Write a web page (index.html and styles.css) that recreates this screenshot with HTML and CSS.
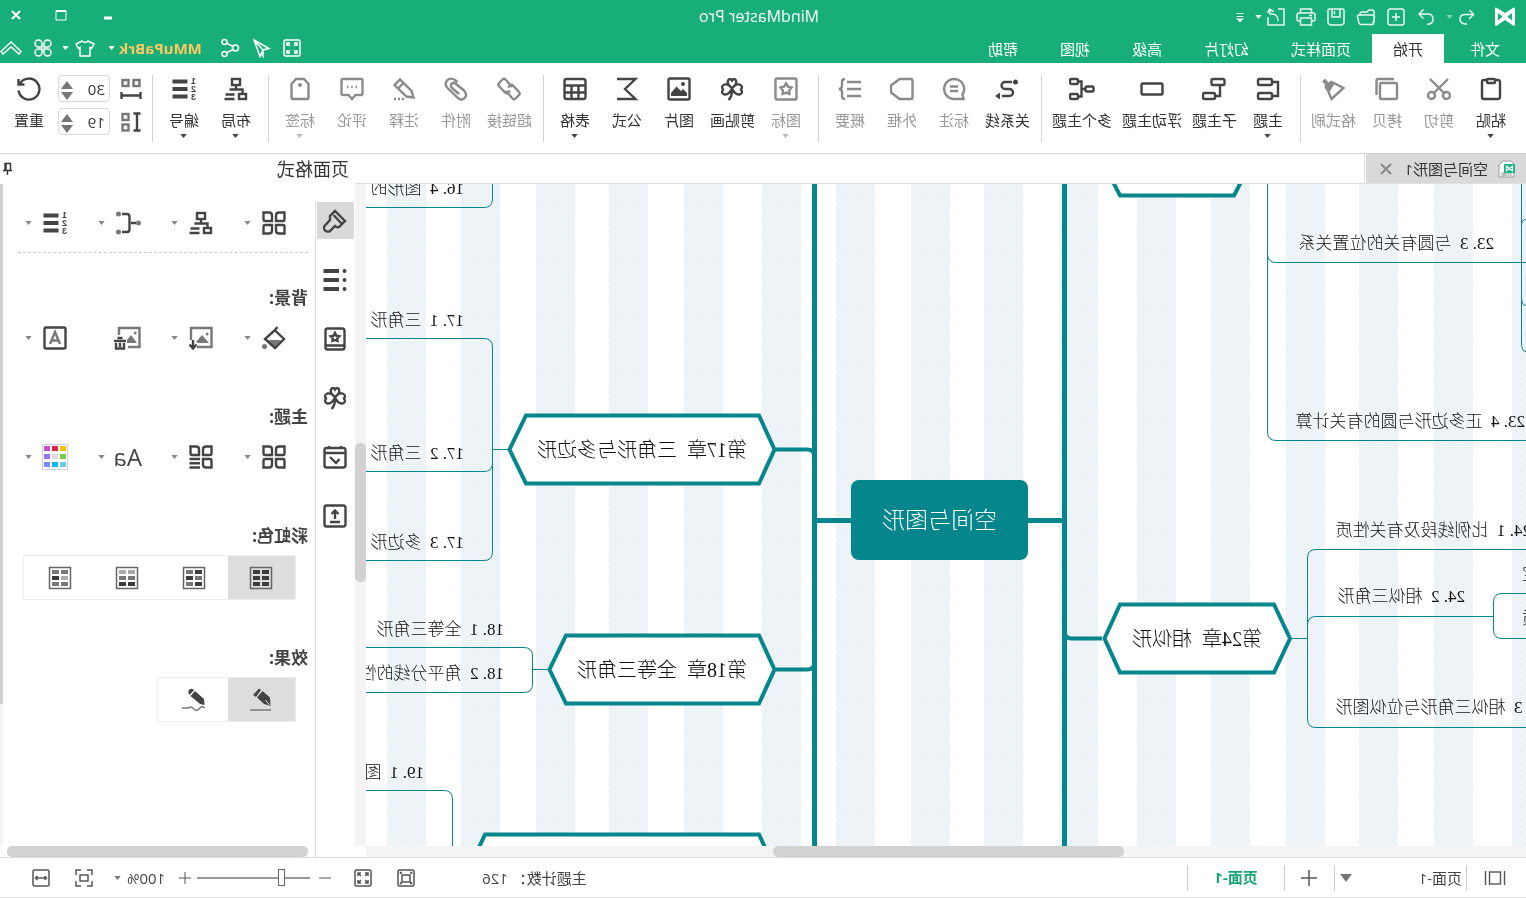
FILE: index.html
```html
<!DOCTYPE html>
<html lang="zh-CN">
<head>
<meta charset="utf-8">
<title>MindMaster Pro</title>
<link rel="stylesheet" href="styles.css">
</head>
<body>
<svg class="sprite" aria-hidden="true">
  <symbol id="caret" viewBox="0 0 8 5"><path class="solid" d="M0 0H8L4 5Z"/></symbol>
  <symbol id="logo" viewBox="0 0 22 20"><path class="solid" fill-rule="evenodd" d="M1 1.500Q1 0 3 1L11 6L19 1Q21 0 21 1.500V17.500Q21 19.500 19 18.500L11 13L3 18.500Q1 19.500 1 17.500ZM4 6V13.500L8.500 9.500ZM18 6V13.500L13.500 9.500Z"/></symbol>
  <symbol id="undo" viewBox="0 0 20 20"><path d="M7.500 3L3.500 7.500L8 12M3.500 7.500H12Q17 7.500 17 12T12 17H10"/></symbol>
  <symbol id="redo" viewBox="0 0 20 20"><path d="M12.500 2.500L17 7L12.500 11.500M17 7H8.500Q3 7 3 12T9 17.500"/></symbol>
  <symbol id="new" viewBox="0 0 20 20"><rect x="2" y="2" width="16" height="16" rx="2"/><path d="M6 10H14M10 6V14"/></symbol>
  <symbol id="open" viewBox="0 0 20 20"><path d="M2 16V5Q2 3 4 3H7L9 5H14Q16 5 16 7V8M3 17.500L1.500 10Q1.500 8 3.500 8H17Q19 8 18.500 10L17 16Q16.500 17.500 15 17.500Z"/></symbol>
  <symbol id="save" viewBox="0 0 20 20"><path d="M3 2H17L18 3V16L16 18H4L2 16V3ZM6 2V10H14V2M11.500 4V7.500"/></symbol>
  <symbol id="print" viewBox="0 0 20 20"><path d="M4.500 6V2H15.500V6M4.500 14H2Q1 14 1 12V8Q1 6 3 6H17Q19 6 19 8V12Q19 14 18 14H15.500M4.500 11H15.500V18H4.500ZM4 8.500H7"/></symbol>
  <symbol id="export" viewBox="0 0 20 20"><path d="M8 2H2V18H18V10M16 2V7Q8 6 8 14M12.500 4.500L16.500 2L18.500 6"/></symbol>
  <symbol id="more" viewBox="0 0 10 12"><path d="M1.500 2.500H8.500M1.500 5.500H8.500"/><path class="solid" d="M1 7.500H9L5 11.500Z"/></symbol>
  <symbol id="fit" viewBox="0 0 20 20"><rect x="2" y="2" width="16" height="16" rx="1.500"/><path d="M5 8V5H8M5.500 5.500L8 8M12 5H15V8M14.500 5.500L12 8M5 12V15H8M5.500 14.500L8 12M15 12V15H12M14.500 14.500L12 12"/></symbol>
  <symbol id="send" viewBox="0 0 20 20"><path d="M17 2L2 10.500L8 12L11 18.500ZM17 2L8 12V18L9.500 15.500"/></symbol>
  <symbol id="share" viewBox="0 0 20 20"><circle cx="15.500" cy="4" r="2.500"/><circle cx="4.500" cy="10" r="3"/><circle cx="15.500" cy="16" r="2.500"/><path d="M7 8.500L13.500 5.200M7 11.500L13.500 14.800"/></symbol>
  <symbol id="shirt" viewBox="0 0 20 20"><path d="M7 3Q10 6 13 3L19 6L16.500 10.500L15 9.500V18H5V9.500L3.500 10.500L1 6Z"/></symbol>
  <symbol id="petals" viewBox="0 0 20 20"><path d="M9 9H5.500A3.500 3.500 0 1 1 9 5.500ZM11 9H14.500A3.500 3.500 0 1 0 11 5.500ZM9 11H5.500A3.500 3.500 0 1 0 9 14.500ZM11 11H14.500A3.500 3.500 0 1 1 11 14.500Z"/></symbol>
  <symbol id="collapse" viewBox="0 0 22 20"><path d="M1 13.500L11 4L21 13.500L19 16L11 9L3 16Z"/></symbol>

  <symbol id="paste" viewBox="0 0 24 24"><rect x="3" y="3" width="18" height="19" rx="2"/><rect class="paper" x="8" y="2" width="8" height="4" rx="1"/></symbol>
  <symbol id="cut" viewBox="0 0 24 24"><circle cx="4.500" cy="18.500" r="3.500"/><circle cx="19.500" cy="18.500" r="3.500"/><path d="M7 16L21 2M17 16L3 2"/></symbol>
  <symbol id="copy" viewBox="0 0 24 24"><rect x="2" y="6" width="17" height="16" rx="1.500"/><path d="M5 2H21Q22.500 2 22.500 3.500V18"/></symbol>
  <symbol id="painter" viewBox="0 0 24 24"><path d="M1.500 11L11 6L19 9L13.500 22Z"/><path class="solid" d="M10 6L14 3.500L16.500 5.500L20 1.500L23 4.500L19.500 8L20.500 11L16 15.500Z"/></symbol>
  <symbol id="topic" viewBox="0 0 24 24"><rect x="8" y="2" width="14" height="6" rx="1.500"/><rect x="8" y="16" width="14" height="6" rx="1.500"/><path d="M8 5H2V19H8"/></symbol>
  <symbol id="subtopic" viewBox="0 0 24 24"><rect x="1.500" y="2" width="13" height="6" rx="1.500"/><rect x="11" y="16" width="12" height="6" rx="1.500"/><path d="M6 8V19H11"/></symbol>
  <symbol id="floating" viewBox="0 0 24 24"><rect x="1.500" y="6.500" width="21" height="11" rx="1.500"/></symbol>
  <symbol id="multi" viewBox="0 0 26 24"><rect x="1.500" y="9.500" width="8" height="5" rx="1.500"/><rect x="17" y="2" width="8" height="5" rx="1.500"/><rect x="17" y="17" width="8" height="5" rx="1.500"/><path d="M9.500 12H13.500M17 4.500H13.500V19.500H17"/></symbol>
  <symbol id="relation" viewBox="0 0 24 24"><circle class="solid" cx="3.500" cy="5" r="2.500"/><path d="M7 5H14A3.500 3.500 0 0 1 14 12H9.500A3.500 3.500 0 0 0 9.500 19H17"/><path class="solid" d="M19 15.500L24 19L19 22.500Z"/></symbol>
  <symbol id="callout" viewBox="0 0 24 24"><path d="M2.500 22L3.500 17.500A10 10 0 1 1 12 22ZM8 9.500H16M8 14H16"/></symbol>
  <symbol id="boundary" viewBox="0 0 24 24"><path d="M3 2H14.500L23 8.500V15.500L14.500 22H3Q1.500 22 1.500 20V4Q1.500 2 3 2Z"/></symbol>
  <symbol id="summary" viewBox="0 0 24 24"><path d="M1 5H15M1 12H15M1 19H15M17 2Q20 2 20 4.500V9Q20 11.500 23 12Q20 12.500 20 15V19.500Q20 22 17 22"/></symbol>
  <symbol id="mark" viewBox="0 0 24 24"><rect x="1.500" y="1.500" width="21" height="21" rx="1.500"/><path d="M12 6.500L14 9.700L17.500 10.500L15.200 13.200L15.400 17L12 15.600L8.600 17L8.800 13.200L6.500 10.500L10 9.700Z"/></symbol>
  <symbol id="clover" viewBox="0 0 24 24"><path d="M12 11Q6.500 7 8 3.500Q10 .500 12 3.500Q14 .500 16 3.500Q17.500 7 12 11ZM12 11.500Q9 6.500 4.500 7.500Q.500 9 3 12.500Q.500 16.500 4.500 17.500Q9 18 12 11.500ZM12 11.500Q15 6.500 19.500 7.500Q23.500 9 21 12.500Q23.500 16.500 19.500 17.500Q15 18 12 11.500Q11.500 19 15.500 23"/></symbol>
  <symbol id="picture" viewBox="0 0 24 24"><rect x="1.500" y="1.500" width="21" height="21" rx="1.500"/><path class="solid" d="M4 19V16L8 12L10 14L14.500 9.500L20 16V19Z"/><circle class="solid" cx="8" cy="7" r="2"/></symbol>
  <symbol id="formula" viewBox="0 0 24 24"><path d="M22 2H3.500L14 12L3.500 22H22"/></symbol>
  <symbol id="table" viewBox="0 0 24 24"><rect x="1.500" y="2" width="21" height="20" rx="2"/><path d="M1.500 8.500H22.500M1.500 15.500H22.500M8.500 9V22M15.500 9V22"/></symbol>
  <symbol id="link" viewBox="0 0 24 24"><path d="M9 10L15.500 2.500Q17 1 18.500 2.500L22 6Q23.300 7.500 22 9L16 15.500Q14.500 17 13 15.500L11 13.500M15 14L8.500 21.500Q7 23 5.500 21.500L2 18Q.700 16.500 2 15L8 8.500Q9.500 7 11 8.500L13 10.500"/></symbol>
  <symbol id="clip" viewBox="0 0 24 24"><path d="M22 10L14 2.500Q10 -.500 17 2.500Q24 4 21.500 10L10 21.500Q6.500 24 3.500 21Q.500 17.500 3.500 14L12.500 6Q15 4.500 17 6.500Q18.500 8.500 16.500 10.500L9 17" visibility="hidden"/><path d="M10.500 5L13 3Q17.500 0 21 3.500Q24 7.500 20.500 11L9.500 21.500Q6 24 3 20.500Q.500 17 4 13.500L12.500 6.500Q15 5 16.500 7Q18 9 16 11L9 17"/></symbol>
  <symbol id="note" viewBox="0 0 24 24"><path d="M2.500 20.500L4.500 14L16 2.500L21.500 8L9.500 19.500ZM12.500 6L18 11.500"/><path d="M12 22H14M16 22H18M20 22H22"/></symbol>
  <symbol id="comment" viewBox="0 0 24 24"><path d="M3 2H21Q22.500 2 22.500 3.500V16.500Q22.500 18 21 18H15.500L12 22L8.500 18H3Q1.500 18 1.500 16.500V3.500Q1.500 2 3 2ZM7 10H8.500M11.300 10H12.800M15.500 10H17"/></symbol>
  <symbol id="tag" viewBox="0 0 24 24"><path d="M8 2H16L20.500 7V20.500Q20.500 22 19 22H5Q3.500 22 3.500 20.500V7Z"/><circle class="solid" cx="12" cy="8" r="2"/></symbol>
  <symbol id="layout" viewBox="0 0 24 24"><rect x="8" y="2" width="8" height="6"/><rect x="2" y="17" width="7" height="5"/><path d="M12 8V12.500M5.500 17V12.500H18.500M13.500 17.500H22.500M13.500 22H23.500"/></symbol>
  <symbol id="hgap" viewBox="0 0 22 22"><rect x="2.500" y="2" width="6" height="6"/><rect x="13.500" y="2" width="6" height="6"/><path class="dark" d="M1.500 14V21M20.500 14V21M1.500 17.500H20.500"/></symbol>
  <symbol id="vgap" viewBox="0 0 22 22"><rect x="13.500" y="3" width="6" height="6"/><rect x="13.500" y="13.500" width="6" height="6"/><path class="dark" d="M1.500 2.500H8.500M1.500 19.500H8.500M5 2.500V19.500"/></symbol>
  <symbol id="reset" viewBox="0 0 24 24"><path d="M21 6.500A10.500 10.500 0 1 0 22.500 13.500M22.500 2V7.500H16.500"/></symbol>

  <symbol id="grid" viewBox="0 0 24 24"><path d="M1.500 1.500H7Q10 1.500 10 4.500V10H3Q1.500 10 1.500 8ZM22.500 1.500H17Q14 1.500 14 4.500V10H21Q22.500 10 22.500 8ZM1.500 22.500H7Q10 22.500 10 19.500V14H3Q1.500 14 1.500 16ZM22.500 22.500H17Q14 22.500 14 19.500V14H21Q22.500 14 22.500 16Z"/></symbol>
  <symbol id="gridlist" viewBox="0 0 24 24"><path d="M1.500 1.500H7Q10 1.500 10 4.500V10H3Q1.500 10 1.500 8ZM22.500 1.500H17Q14 1.500 14 4.500V10H21Q22.500 10 22.500 8ZM1.500 22.500H7Q10 22.500 10 19.500V14H3Q1.500 14 1.500 16ZM13 14H23.500M13 18.200H23.500M13 22.500H23.500"/></symbol>
  <symbol id="branch" viewBox="0 0 26 24"><path d="M5 12H10M19 3H14Q11.500 3 11.500 6V18Q11.500 21 14 21H19"/><g class="mute"><circle cx="2.500" cy="12" r="2.500"/><circle cx="22.500" cy="3" r="2.500"/><circle cx="22.500" cy="21" r="2.500"/></g></symbol>
  <symbol id="bucket" viewBox="0 0 24 24"><path class="mutefill" d="M5 14H19L11 21Z"/><path d="M8.500 1L12 5L21 13L11 22L2 13L11.500 4"/><circle class="mutefill" cx="21.500" cy="20.500" r="2.500"/></symbol>
  <symbol id="imgdown" viewBox="0 0 26 24"><path class="muteline" d="M17 21H2.500V2H23V14"/><path class="mutefill" d="M5 17L12 9L18 16L16 17ZM8 7A1.500 1.500 0 1 0 8 9Z"/><path d="M21 14V22M17.500 18.500L21 22.500L24.500 18.500"/></symbol>
  <symbol id="imgdel" viewBox="0 0 28 24"><path class="muteline" d="M14 21H2.500V2H23V9"/><path class="mutefill" d="M5 17L11 9L15 14V17ZM8 6A1.500 1.500 0 1 0 8 8Z"/><path d="M16 15H28M19.500 12H24.500M18 17V22.500H26V17M22 17V21"/></symbol>
  <symbol id="watermark" viewBox="0 0 24 24"><rect x="1.500" y="1.500" width="21" height="21" rx="1.500"/><path class="muteline" d="M7 18L12 6L17 18M9 14.500H15"/></symbol>
  <symbol id="brush" viewBox="0 0 24 24"><path d="M2 12L12 2L17 7V11L22.500 17Q24 19 22 21.500Q19 23.500 17 22L12 17Q10 19 8 18ZM13.500 6L5.500 14.500"/></symbol>
  <symbol id="outline" viewBox="0 0 24 24"><path class="bold" d="M8 3H23.500M8 12H23.500M8 21H23.500"/><g class="solid"><circle cx="2.500" cy="3" r="2"/><circle cx="2.500" cy="12" r="2"/><circle cx="2.500" cy="21" r="2"/></g></symbol>
  <symbol id="starbook" viewBox="0 0 24 24"><rect x="2.500" y="1.500" width="19" height="21" rx="2"/><path d="M2.500 18.500H21.500M12 6L13.300 8.700L16.300 9.300L14.200 11.300L14.500 14L12 13L9.500 14L9.800 11.300L7.700 9.300L10.700 8.700Z"/></symbol>
  <symbol id="calendar" viewBox="0 0 24 24"><rect x="1.500" y="3" width="21" height="19.500" rx="2"/><path d="M2 8H22M6 1V4M18 1V4M7.500 14L11 18L17 12"/></symbol>
  <symbol id="upload" viewBox="0 0 24 24"><rect x="1.500" y="1.500" width="21" height="21" rx="2"/><path d="M12 15V7M8.500 10L12 6.500L15.500 10M7 18H17"/></symbol>
  <symbol id="ink" viewBox="0 0 24 24"><path class="solid dark" d="M2.500 18L3 9.500L10.500 3L16 9.500L9 16Z"/><path class="solid dark" d="M12 2L14 .500L20 7L17 9Z"/><path class="cutline" d="M3.500 17L7.500 12"/><path class="muteline" d="M2 22H23"/></symbol>
  <symbol id="sketch" viewBox="0 0 24 24"><path class="solid dark" d="M1.500 17L2 11L11 3L15.500 8L6 16Z"/><path class="solid dark" d="M12 2Q15 -.500 17 2Q18.500 4 16.500 7Z"/><path class="muteline" d="M1 20Q4 17 7 21Q10 24 12.500 20.500Q15 18.500 18 20H24"/></symbol>
  <symbol id="center" viewBox="0 0 20 20"><rect x="2" y="2" width="16" height="16" rx="1.500"/><rect x="6" y="7" width="8" height="7"/><path d="M4.500 6V4.500H6M14 4.500H15.500V6M4.500 14V15.500H6M15.500 14V15.500H14"/></symbol>
  <symbol id="focus" viewBox="0 0 20 20"><rect x="6" y="7" width="8" height="6"/><path d="M2 7V2H7M13 2H18V7M2 13V18H7M18 13V18H13"/></symbol>
  <symbol id="fitwidth" viewBox="0 0 20 20"><rect x="2" y="2" width="16" height="16" rx="1.500"/><path d="M4.500 10H15.500M6.500 8L4.500 10L6.500 12M13.500 8L15.500 10L13.500 12"/></symbol>
  <symbol id="cells" viewBox="0 0 24 24"><rect x="1.500" y="1.500" width="21" height="21"/></symbol>
</svg>

<div class="app">
  <header class="titlebar">
    <div class="quick">
      <svg class="logo"><use href="#logo"/></svg>
      <button class="qbtn" aria-label="撤销"><svg class="i20"><use href="#undo"/></svg><svg class="caret dim"><use href="#caret"/></svg></button>
      <button class="qbtn" aria-label="重做"><svg class="i20"><use href="#redo"/></svg></button>
      <button class="qbtn" aria-label="新建"><svg class="i20"><use href="#new"/></svg></button>
      <button class="qbtn" aria-label="打开"><svg class="i20"><use href="#open"/></svg></button>
      <button class="qbtn" aria-label="保存"><svg class="i20"><use href="#save"/></svg></button>
      <button class="qbtn" aria-label="打印"><svg class="i20"><use href="#print"/></svg></button>
      <button class="qbtn" aria-label="导出"><svg class="i20"><use href="#export"/></svg><svg class="caret"><use href="#caret"/></svg></button>
      <button class="qbtn" aria-label="更多"><svg class="more"><use href="#more"/></svg></button>
    </div>
    <h1 class="title">MindMaster Pro</h1>
    <div class="window">
      <button aria-label="最小化"><svg viewBox="0 0 12 12"><path d="M2 9H10" stroke-width="3"/></svg></button>
      <button aria-label="最大化"><svg viewBox="0 0 12 12"><path d="M1 1.500H11V11H1Z"/><path d="M1 2H11" stroke-width="2"/></svg></button>
      <button class="close" aria-label="关闭"><svg viewBox="0 0 12 12"><path d="M2 2L10 10M10 2L2 10" stroke-width="2"/></svg></button>
    </div>
  </header>

  <nav class="menubar">
    <button class="file">文件</button><button class="active">开始</button><button>页面样式</button><button>幻灯片</button><button>高级</button><button>视图</button><button>帮助</button>
    <div class="account">
      <button aria-label="适应窗口"><svg class="i20"><use href="#fit"/></svg></button>
      <button aria-label="发送"><svg class="i20"><use href="#send"/></svg></button>
      <button aria-label="分享"><svg class="i20"><use href="#share"/></svg></button>
      <button class="user">MMuPaBrk<svg class="caret"><use href="#caret"/></svg></button>
      <button class="skin" aria-label="皮肤"><svg class="i20"><use href="#shirt"/></svg><svg class="caret"><use href="#caret"/></svg></button>
      <button class="apps" aria-label="应用"><svg class="i20"><use href="#petals"/></svg></button>
      <button class="fold" aria-label="收起功能区"><svg><use href="#collapse"/></svg></button>
    </div>
  </nav>

  <section class="ribbon">
    <button class="tool"><svg><use href="#paste"/></svg><span>粘贴</span><svg class="caret"><use href="#caret"/></svg></button>
    <button class="tool off"><svg><use href="#cut"/></svg><span>剪切</span></button>
    <button class="tool off"><svg><use href="#copy"/></svg><span>拷贝</span></button>
    <button class="tool off"><svg><use href="#painter"/></svg><span>格式刷</span></button>
    <i class="sep"></i>
    <button class="tool"><svg><use href="#topic"/></svg><span>主题</span><svg class="caret"><use href="#caret"/></svg></button>
    <button class="tool"><svg><use href="#subtopic"/></svg><span>子主题</span></button>
    <button class="tool"><svg><use href="#floating"/></svg><span>浮动主题</span></button>
    <button class="tool"><svg class="wide"><use href="#multi"/></svg><span>多个主题</span></button>
    <i class="sep"></i>
    <button class="tool"><svg><use href="#relation"/></svg><span>关系线</span></button>
    <button class="tool off"><svg><use href="#callout"/></svg><span>标注</span></button>
    <button class="tool off"><svg><use href="#boundary"/></svg><span>外框</span></button>
    <button class="tool off"><svg><use href="#summary"/></svg><span>概要</span></button>
    <i class="sep"></i>
    <button class="tool off"><svg><use href="#mark"/></svg><span>图标</span><svg class="caret"><use href="#caret"/></svg></button>
    <button class="tool"><svg><use href="#clover"/></svg><span>剪贴画</span></button>
    <button class="tool"><svg><use href="#picture"/></svg><span>图片</span></button>
    <button class="tool"><svg><use href="#formula"/></svg><span>公式</span></button>
    <button class="tool"><svg><use href="#table"/></svg><span>表格</span><svg class="caret"><use href="#caret"/></svg></button>
    <i class="sep"></i>
    <button class="tool off"><svg><use href="#link"/></svg><span>超链接</span></button>
    <button class="tool off"><svg><use href="#clip"/></svg><span>附件</span></button>
    <button class="tool off"><svg><use href="#note"/></svg><span>注释</span></button>
    <button class="tool off"><svg><use href="#comment"/></svg><span>评论</span></button>
    <button class="tool off"><svg><use href="#tag"/></svg><span>标签</span><svg class="caret"><use href="#caret"/></svg></button>
    <i class="sep"></i>
    <button class="tool"><svg><use href="#layout"/></svg><span>布局</span><svg class="caret"><use href="#caret"/></svg></button>
    <button class="tool"><svg viewBox="0 0 24 24"><path class="bold" d="M8.500 4.500H23.500M8.500 12H23.500M8.500 19.500H23.500"/><g class="digits"><text x="0" y="7">1</text><text x="0" y="15">2</text><text x="0" y="23">3</text></g></svg><span>编号</span><svg class="caret"><use href="#caret"/></svg></button>
    <i class="sep"></i>
    <div class="spacing">
      <label for="hspace" aria-label="水平间距"><svg><use href="#hgap"/></svg></label>
      <div class="spin"><input id="hspace" type="text" value="30"><div class="arrows"><button aria-label="增加"><svg viewBox="0 0 12 8"><path d="M0 8L6 0L12 8Z"/></svg></button><button aria-label="减少"><svg viewBox="0 0 12 8"><path d="M0 0L6 8L12 0Z"/></svg></button></div></div>
      <label for="vspace" aria-label="垂直间距"><svg><use href="#vgap"/></svg></label>
      <div class="spin"><input id="vspace" type="text" value="19"><div class="arrows"><button aria-label="增加"><svg viewBox="0 0 12 8"><path d="M0 8L6 0L12 8Z"/></svg></button><button aria-label="减少"><svg viewBox="0 0 12 8"><path d="M0 0L6 8L12 0Z"/></svg></button></div></div>
    </div>
    <button class="tool"><svg><use href="#reset"/></svg><span>重置</span></button>
  </section>

  <div class="body">
    <main class="editor">
      <div class="doctabs">
        <div class="doctab">
          <svg class="docicon" viewBox="0 0 18 18"><path d="M5 1H13L17 5V17H2V4Z" fill="#fff" stroke="#999"/><path d="M4 13H15M4 15H15M12 13V17" stroke="#999"/><rect x="1" y="4" width="11" height="9" fill="#10b981" stroke="none"/><path d="M3.500 6V11L6.500 8.500L9.500 11V6L6.500 8.500Z" fill="none" stroke="#fff" stroke-width="1.200"/></svg>
          <span>空间与图形1</span>
          <button aria-label="关闭标签"><svg viewBox="0 0 12 12"><path d="M1 1L11 11M11 1L1 11"/></svg></button>
        </div>
      </div>
      <div class="canvas">
        <svg class="links" aria-hidden="true">
          <defs>
            <pattern id="hatch" width="16" height="14" patternUnits="userSpaceOnUse">
              <path d="M0 0L16 14M0 7L8 14M8 0L16 7" stroke="#e6edf0"/>
              <path d="M16 0L0 14M10 0L0 9M16 9L10 14" stroke="#f4f9fb"/>
            </pattern>
            <pattern id="stripes" x="-25" width="375" height="2000" patternUnits="userSpaceOnUse">
              <path fill="#edf3f6" stroke="none" d="M0 0H39V2000H0ZM78 0H117V2000H78ZM153 0H192V2000H153ZM226 0H265V2000H226ZM301 0H340V2000H301Z"/>
              <path fill="url(#hatch)" stroke="none" opacity=".7" d="M0 0H39V2000H0ZM78 0H117V2000H78ZM153 0H192V2000H153ZM226 0H265V2000H226ZM301 0H340V2000H301Z"/>
            </pattern>
          </defs>
          <rect width="100%" height="100%" fill="url(#stripes)" stroke="none"/>
          <g transform="translate(0 -184)" fill="none" stroke="#04868c">
            <g>
              <path d="M258.500 184V432Q258.500 440.500 250 440.500H0M258.500 254Q258.500 262.500 250 262.500H0M4.500 184V343Q4.500 351.500 0 351.500M4.500 226Q4.500 219.500 0 219.500M4.500 297Q4.500 305.500 0 305.500"/>
              <path d="M235 638.500H218.500M0 549.500H210Q218.500 549.500 218.500 558V719Q218.500 727.500 210 727.500H0M218.500 625Q218.500 616.500 210 616.500H32.500M0 593.500H24Q32.500 593.500 32.500 602V630Q32.500 638.500 24 638.500H0"/>
              <path d="M1033.500 184V199Q1033.500 207.500 1042 207.500H1160"/>
              <path d="M1018 449.500H1033.500M1160 338.500H1042Q1033.500 338.500 1033.500 347V552Q1033.500 560.500 1042 560.500H1160M1033.500 463Q1033.500 471.500 1042 471.500H1160"/>
              <path d="M978 669.500H993.500M1160 647.500H1002Q993.500 647.500 993.500 656V684Q993.500 692.500 1002 692.500H1160M1160 790.500H1082Q1073.500 790.500 1073.500 799V846"/>
            </g>
            <g stroke-width="5"><path d="M461.500 184V860M711.500 184V860M461.500 520.500H711.500"/></g>
            <g stroke-width="4">
              <path d="M461.500 630Q461.500 638.500 455 638.500H424M711.500 458Q711.500 449.500 718 449.500H750M711.500 661Q711.500 669.500 718 669.500H750"/>
              <g fill="#fff">
                <path d="M283 178L292 195.500H406L415 178"/>
                <path d="M236 638.500L252 604.500H406L421.500 638.500L406 672.500H252Z"/>
                <path d="M751.500 449.500L767 415.500H1000L1016.500 449.500L1000 483.500H767Z"/>
                <path d="M751.500 669.500L767 635.500H960L976.500 669.500L960 703.500H767Z"/>
                <path d="M757 856L767 834.500H1041L1051 856"/>
              </g>
            </g>
          </g>
        </svg>
        <div class="root">空间与图形</div>
        <div class="chapter" style="left:264px;top:441px">第24章  相似形</div>
        <div class="chapter" style="left:779px;top:252px">第17章  三角形与多边形</div>
        <div class="chapter" style="left:779px;top:472px">第18章  全等三角形</div>
        <div class="leaf" style="left:32px;top:48px">23. 3  与圆有关的位置关系</div>
        <div class="leaf" style="left:1px;top:226px">23. 4  正多边形与圆的有关计算</div>
        <div class="leaf" style="left:-5px;top:335px">24. 1  比例线段及有关性质</div>
        <div class="leaf" style="left:61px;top:401px">24. 2  相似三角形</div>
        <div class="leaf" style="left:-22px;top:512px">24. 3  相似三角形与位似图形</div>
        <div class="leaf" style="left:-13px;top:379px">定</div>
        <div class="leaf" style="left:-13px;top:423px">质</div>
        <div class="leaf" style="left:1062px;top:-7px">16. 4  图形的</div>
        <div class="leaf" style="left:1062px;top:125px">17. 1  三角形</div>
        <div class="leaf" style="left:1062px;top:258px">17. 2  三角形</div>
        <div class="leaf" style="left:1062px;top:347px">17. 3  多边形</div>
        <div class="leaf" style="left:1022px;top:434px">18. 1  全等三角形</div>
        <div class="leaf" style="left:1022px;top:478px">18. 2  角平分线的性</div>
        <div class="leaf" style="left:1102px;top:577px">19. 1  图</div>
      </div>
      <div class="vscroll"><i></i></div>
      <div class="hscroll"><i></i></div>
    </main>

    <aside class="side">
      <div class="sidehead"><h2>页面格式</h2><button aria-label="固定"><svg viewBox="0 0 12 14"><path d="M2 8.500H11M3.500 8V1.500H9V8M8 1.500V8M6.500 9V13"/></svg></button></div>
      <div class="sidebody">
        <div class="rail">
          <button class="on" aria-label="格式"><svg><use href="#brush"/></svg></button>
          <button aria-label="大纲"><svg><use href="#outline"/></svg></button>
          <button aria-label="图标"><svg><use href="#starbook"/></svg></button>
          <button aria-label="剪贴画"><svg><use href="#clover"/></svg></button>
          <button aria-label="任务"><svg><use href="#calendar"/></svg></button>
          <button aria-label="附件"><svg><use href="#upload"/></svg></button>
        </div>
        <div class="panel">
          <div class="row first">
            <button aria-label="结构"><svg><use href="#grid"/></svg><svg class="caret"><use href="#caret"/></svg></button>
            <button aria-label="布局"><svg><use href="#layout"/></svg><svg class="caret"><use href="#caret"/></svg></button>
            <button aria-label="分支"><svg class="w26"><use href="#branch"/></svg><svg class="caret"><use href="#caret"/></svg></button>
            <button aria-label="编号"><svg viewBox="0 0 24 24"><path class="bold" d="M8.500 4.500H23.500M8.500 12H23.500M8.500 19.500H23.500"/><g class="digits"><text x="0" y="7">1</text><text x="0" y="15">2</text><text x="0" y="23">3</text></g></svg><svg class="caret"><use href="#caret"/></svg></button>
          </div>
          <section>
            <h3>背景:</h3>
            <div class="row">
              <button aria-label="颜色"><svg><use href="#bucket"/></svg><svg class="caret"><use href="#caret"/></svg></button>
              <button aria-label="插入图片"><svg class="w26"><use href="#imgdown"/></svg><svg class="caret"><use href="#caret"/></svg></button>
              <button aria-label="移除图片"><svg class="w28"><use href="#imgdel"/></svg></button>
              <button aria-label="水印"><svg><use href="#watermark"/></svg><svg class="caret"><use href="#caret"/></svg></button>
            </div>
          </section>
          <section>
            <h3>主题:</h3>
            <div class="row">
              <button aria-label="主题"><svg><use href="#grid"/></svg><svg class="caret"><use href="#caret"/></svg></button>
              <button aria-label="主题列表"><svg><use href="#gridlist"/></svg><svg class="caret"><use href="#caret"/></svg></button>
              <button class="font"><span>Aa</span><svg class="caret"><use href="#caret"/></svg></button>
              <button aria-label="主题颜色"><svg class="palette" viewBox="0 0 26 26"><rect x=".5" y=".5" width="25" height="25" fill="#fff" stroke="#cbd0e6"/><g stroke="none"><path fill="#f0c400" d="M2 2H8V7H2Z"/><path fill="#dc2450" d="M10 2H16V7H10Z"/><path fill="#c84ccc" d="M18 2H24V7H18Z"/><path fill="#74d044" d="M2 10H8V15H2Z"/><path fill="#ddd" d="M10 10H16V15H10Z"/><path fill="#9a74ee" d="M18 10H24V15H18Z"/><path fill="#6accdd" d="M2 18H8V23H2Z"/><path fill="#00b8f8" d="M10 18H16V23H10Z"/><path fill="#7a88ff" d="M18 18H24V23H18Z"/></g></svg><svg class="caret"><use href="#caret"/></svg></button>
            </div>
          </section>
          <section>
            <h3>彩虹色:</h3>
            <div class="segment">
              <button class="on" aria-label="单色"><svg viewBox="0 0 24 24"><use href="#cells"/><path class="c1" d="M4 4H11V8H4ZM13 4H20V8H13ZM4 10H11V14H4ZM13 10H20V14H13ZM4 16H11V20H4ZM13 16H20V20H13Z"/></svg></button>
              <button aria-label="彩虹一"><svg viewBox="0 0 24 24"><use href="#cells"/><path class="c1" d="M4 4H11V8H4ZM13 10H20V14H13ZM4 16H11V20H4Z"/><path class="c2" d="M13 4H20V8H13ZM4 10H11V14H4ZM13 16H20V20H13Z"/></svg></button>
              <button aria-label="彩虹二"><svg viewBox="0 0 24 24"><use href="#cells"/><path class="c3" d="M4 4H11V8H4ZM13 4H20V8H13Z"/><path class="c2" d="M4 10H11V14H4ZM13 10H20V14H13Z"/><path class="c1" d="M4 16H11V20H4ZM13 16H20V20H13Z"/></svg></button>
              <button aria-label="彩虹三"><svg viewBox="0 0 24 24"><use href="#cells"/><path class="c2" d="M4 4H11V8H4ZM13 4H20V8H13ZM4 16H11V20H4ZM13 16H20V20H13Z"/><path class="c3" d="M4 10H11V14H4Z"/><path class="c1" d="M13 10H20V14H13Z"/></svg></button>
            </div>
          </section>
          <section>
            <h3>效果:</h3>
            <div class="segment">
              <button class="on" aria-label="标准"><svg><use href="#ink"/></svg></button>
              <button aria-label="手绘"><svg><use href="#sketch"/></svg></button>
            </div>
          </section>
        </div>
        <div class="pv"><i></i></div>
        <div class="ph"><i></i></div>
      </div>
    </aside>
  </div>

  <footer class="status">
    <button class="pages" aria-label="页面列表"><svg viewBox="0 0 22 20"><rect x="5.500" y="4" width="11" height="12"/><path d="M1.500 3V17M20.500 3V17"/></svg></button>
    <i class="bar"></i>
    <label class="pagepick"><select aria-label="页面"><option>页面-1</option></select><svg viewBox="0 0 12 8"><path d="M0 0H12L6 8Z"/></svg></label>
    <i class="bar"></i>
    <button class="add" aria-label="添加页面"><svg viewBox="0 0 18 18"><path d="M1 9H17M9 1V17"/></svg></button>
    <i class="bar"></i>
    <button class="page">页面-1</button>
    <i class="bar"></i>
    <span class="count">主题计数： 126</span>
    <button class="s1" aria-label="居中"><svg class="i20"><use href="#center"/></svg></button>
    <button class="s2" aria-label="适应"><svg class="i20"><use href="#fit"/></svg></button>
    <button class="s3" aria-label="缩小"><svg viewBox="0 0 12 12"><path d="M0 6H12"/></svg></button>
    <input class="zoom" type="range" min="0" max="100" value="24" aria-label="缩放">
    <button class="s4" aria-label="放大"><svg viewBox="0 0 12 12"><path d="M0 6H12M6 0V12"/></svg></button>
    <button class="percent">100%<svg class="caret"><use href="#caret"/></svg></button>
    <button class="s5" aria-label="聚焦"><svg class="i20"><use href="#focus"/></svg></button>
    <button class="s6" aria-label="适应宽度"><svg class="i20"><use href="#fitwidth"/></svg></button>
  </footer>
</div>
</body>
</html>
```
FILE: styles.css
```css
* { box-sizing: border-box; }

body {
  margin: 0;
  font-family: "Open Sans", "Noto Sans CJK SC", sans-serif;
  font-size: 15px;
  line-height: 20px;
  color: #333;
  background: #fff;
  overflow: hidden;
}

button {
  padding: 0;
  border: 0;
  background: none;
  color: inherit;
  font: inherit;
  display: flex;
  align-items: center;
  flex: none;
}

h1, h2, h3 { margin: 0; font-weight: 400; }

svg { display: block; fill: none; stroke: currentColor; flex: none; }
.sprite { position: absolute; width: 0; height: 0; }
.solid { fill: currentColor; stroke: none; }
.bold { stroke-width: 4; }
.paper { fill: #fff; }
.mute, .mutefill { fill: #777; stroke: none; }
.muteline { stroke: #777; }
.dark { color: #444; stroke: #444; }
.solid.dark { stroke: none; }
.cutline { stroke: #ddd; stroke-width: 1; }
.digits { font: 700 9px "Liberation Sans", sans-serif; fill: currentColor; stroke: none; }

.i20 { width: 20px; height: 20px; stroke-width: 1.5; }
.caret { width: 7px; height: 4px; }

/* The whole window is shown in mirror view. */
.app {
  height: 100vh;
  display: flex;
  flex-direction: column;
  transform: scaleX(-1);
}

/* Title bar */
.titlebar {
  height: 34px;
  flex: none;
  display: grid;
  grid-template-columns: 1fr auto 1fr;
  align-items: center;
  background: #17ae78;
  color: #fff;
}
.quick { display: flex; align-items: center; gap: 10px; padding-left: 10px; }
.logo { width: 22px; height: 20px; margin-right: 7px; }
.qbtn { gap: 4px; opacity: .9; }
.dim { opacity: .5; }
.more { width: 10px; height: 12px; }
.title { font-size: 16px; line-height: 22px; padding: 0 0 2px 8px; }
.window { display: flex; justify-content: flex-end; align-items: center; }
.window button { width: 47px; height: 34px; padding-bottom: 4px; justify-content: center; }
.window .close { width: 38px; padding-left: 6px; }
.window svg { width: 12px; height: 12px; }

/* Menu bar */
.menubar {
  height: 29px;
  flex: none;
  display: flex;
  background: #17ae78;
  color: #fff;
}
.menubar > button { padding: 0 21px; }
.menubar > .file { padding: 0 26px; }
.menubar > .active { background: #fff; color: #333; }
.account { margin-left: auto; display: flex; align-items: center; gap: 11px; padding-bottom: 2px; }
.user { margin-left: 7px; gap: 4px; color: #fdc960; font-weight: 700; }
.user .caret { color: #fff; }
.skin { gap: 6px; margin-left: 2px; }
.apps { margin-left: -2px; }
.fold svg { width: 22px; height: 20px; stroke-width: 1.5; }

/* Ribbon */
.ribbon {
  height: 91px;
  flex: none;
  display: flex;
  padding: 12px 3px 0 9px;
  border-bottom: 1px solid #d2d2d2;
}
.tool {
  min-width: 52px;
  height: 70px;
  padding: 2px 5px 0;
  flex-direction: column;
  color: #444;
}
.tool span { margin-top: 9px; white-space: nowrap; color: #333; }
.tool > svg { width: 24px; height: 24px; stroke-width: 2.4; }
.tool > .wide { width: 26px; }
.tool > .caret { width: 7px; height: 4px; margin-top: 4px; }
.tool.off { color: #8a8a8a; }
.tool.off span { color: #999; }
.tool.off .caret { color: #bbb; }
.sep { width: 1px; height: 67px; margin: 0 6px 0 5px; background: #d2d2d2; flex: none; }
.spacing {
  display: grid;
  grid-template-columns: 22px 52px;
  grid-auto-rows: 27px;
  gap: 6px 10px;
  margin-left: 4px;
  width: 91px;
  align-items: center;
  color: #777;
}
.spacing label svg { width: 22px; height: 22px; stroke-width: 2.4; }
.spin { display: flex; height: 27px; border: 1px solid #d8d8d8; border-radius: 4px; }
.spin input { width: 30px; padding: 0 0 0 4px; border: 0; background: none; font: inherit; color: #333; }
.arrows { display: flex; flex-direction: column; justify-content: space-between; padding: 4px 0 0 6px; }
.arrows svg { width: 12px; height: 8px; fill: #777; stroke: none; }
.arrows button { height: 10px; }

/* Work area */
.body { flex: 1; min-height: 0; display: flex; }
.editor {
  flex: 1;
  min-width: 0;
  display: grid;
  grid-template-columns: minmax(0, 1fr) 11px;
  grid-template-rows: 30px minmax(0, 1fr) 11px;
}
.doctabs { grid-column: 1 / 3; display: flex; border-bottom: 1px solid #e0e0e0; }
.doctab { display: flex; align-items: center; width: 160px; padding: 0 14px 0 10px; background: #d9d9d9; box-shadow: 1px 0 #fff, 2px 0 #ddd; }
.docicon { width: 18px; height: 18px; }
.doctab span { margin-left: 10px; white-space: nowrap; font-size: 15px; }
.doctab button { margin-left: auto; color: #888; }
.doctab button svg { width: 12px; height: 12px; stroke-width: 2; }
.canvas { grid-column: 1; grid-row: 2; position: relative; overflow: hidden; }
.links { width: 100%; height: 100%; }
.root, .chapter, .leaf {
  position: absolute;
  white-space: pre;
  font-family: "Liberation Serif", "Noto Sans CJK SC", serif;
  font-weight: 300;
  color: #111;
}
.root {
  left: 498px;
  top: 296px;
  width: 177px;
  height: 80px;
  padding-top: 2px;
  border-radius: 8px;
  background: #04868c;
  color: #fff;
  font-size: 23px;
  line-height: 78px;
  text-align: center;
}
.chapter { font-size: 20px; line-height: 28px; }
.leaf { font-size: 17px; line-height: 24px; }

.vscroll { grid-column: 2; grid-row: 2; background: #f4f4f4; padding-top: 259px; }
.vscroll i { display: block; height: 139px; border-radius: 5px; background: #d2d2d2; }
.hscroll { grid-column: 1; grid-row: 3; background: #f4f4f4; padding-left: 402px; }
.hscroll i { display: block; width: 351px; height: 11px; border-radius: 5px; background: #d2d2d2; }

/* Side panel */
.side { width: 355px; flex: none; display: flex; flex-direction: column; }
.sidehead { height: 30px; flex: none; display: flex; align-items: center; justify-content: space-between; padding: 0 2px 0 6px; }
.sidehead h2 { font-size: 18px; line-height: 24px; }
.sidehead svg { width: 12px; height: 14px; stroke-width: 1.4; }
.sidebody {
  flex: 1;
  min-height: 0;
  display: grid;
  grid-template-columns: 39px minmax(0, 1fr) 3px;
  grid-template-rows: minmax(0, 1fr) 11px;
}
.rail { grid-row: 1 / 3; padding: 18px 0 0 1px; display: flex; flex-direction: column; gap: 22px; color: #444; }
.rail button { width: 37px; height: 37px; justify-content: center; }
.rail .on { background: #d9d9d9; }
.rail svg { width: 24px; height: 24px; stroke-width: 2.4; }
.panel { margin-top: 18px; padding-left: 7px; border-left: 1px solid #ddd; color: #444; }
.row { display: flex; height: 42px; padding-left: 20px; }
.row.first { height: 51px; padding-bottom: 8px; margin: 0 15px 33px 0; border-bottom: 1px dashed #ccc; }
.row button { width: 73px; }
.row svg { width: 24px; height: 24px; margin: 0 2px; stroke-width: 2.4; }
.row .w26 { width: 26px; margin: 0 1px; }
.row .w28 { width: 28px; margin: 0; }
.row .palette { width: 26px; height: 26px; margin: 0 1px; stroke-width: 1; }
.row .caret { width: 7px; height: 4px; margin: 0 0 0 9px; color: #888; }
.font span { width: 28px; font-family: "Open Sans", sans-serif; font-size: 24px; line-height: 28px; font-weight: 500; }
.panel section { margin-bottom: 46px; }
.panel h3 { margin-bottom: 7px; font-size: 17px; line-height: 24px; font-weight: 700; }
.segment { display: inline-flex; margin-left: 12px; padding-right: 3px; border: 1px solid #eee; }
.segment button { width: 67px; height: 43px; justify-content: center; color: #666; }
.segment .on { background: #ddd; }
.segment svg { width: 24px; height: 24px; stroke-width: 1.5; }
.segment .muteline { stroke-width: 2.4; }
.c1 { fill: #3c3c3c; stroke: none; }
.c2 { fill: #777; stroke: none; }
.c3 { fill: #aaa; stroke: none; }
.pv { background: #f4f4f4; }
.pv i { display: block; height: 520px; background: #d2d2d2; }
.ph { grid-column: 2 / 4; border-left: 1px solid #ddd; padding: 0 7px 0 7px; }
.ph i { display: block; height: 11px; border-radius: 5px; background: #d2d2d2; }

/* Status bar */
.status {
  height: 41px;
  flex: none;
  display: flex;
  align-items: center;
  padding: 0 31px 0 20px;
  border: solid #ddd;
  border-width: 1px 0;
  color: #555;
}
.bar { width: 1px; height: 26px; background: #ccc; flex: none; }
.pages { margin-right: 17px; }
.pages svg { width: 22px; height: 20px; stroke-width: 1.4; }
.pagepick { display: flex; align-items: center; width: 131px; padding-left: 4px; }
.pagepick select { appearance: none; flex: 1; padding: 0; border: 0; background: none; font: inherit; color: #444; }
.pagepick svg { width: 12px; height: 8px; fill: #777; stroke: none; margin-right: 5px; }
.add { width: 49px; justify-content: center; }
.add svg { width: 18px; height: 18px; stroke-width: 1.5; }
.page { width: 96px; padding-bottom: 2px; justify-content: center; font-weight: 700; color: #17a673; }
.count { margin-left: auto; margin-right: 66px; white-space: pre; color: #444; }
.s2 { margin: 0 22px 0 23px; }
.status .s3 svg, .status .s4 svg { width: 12px; height: 12px; }
.zoom { appearance: none; width: 113px; height: 20px; margin: 0 6px 0 9px; background: none; }
.zoom::-webkit-slider-runnable-track { height: 2px; background: #999; }
.zoom::-webkit-slider-thumb { appearance: none; width: 7px; height: 17px; margin-top: -8px; border: 1px solid #666; background: #fff; }
.percent { margin-left: 14px; gap: 6px; color: #444; }
.percent .caret { color: #777; }
.s5 { margin: 0 23px 0 20px; }
```
